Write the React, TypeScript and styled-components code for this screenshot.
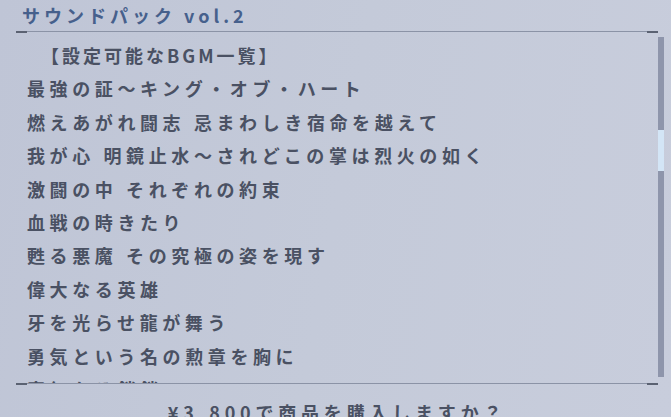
import styled, { createGlobalStyle } from 'styled-components';

const GlobalStyles = createGlobalStyle`
  html, body {
    margin: 0;
    padding: 0;
    overflow: hidden;
  }
  body {
    width: 671px;
    height: 417px;
    background: linear-gradient(100deg, #bfc5d6 0%, #c4cad9 50%, #c8cddc 100%);
    font-family: "Noto Sans CJK JP", "Noto Sans", sans-serif;
  }
`;

const tracks = [
  '【設定可能なBGM一覧】',
  '最強の証〜キング・オブ・ハート',
  '燃えあがれ闘志 忌まわしき宿命を越えて',
  '我が心 明鏡止水〜されどこの掌は烈火の如く',
  '激闘の中 それぞれの約束',
  '血戦の時きたり',
  '甦る悪魔 その究極の姿を現す',
  '偉大なる英雄',
  '牙を光らせ龍が舞う',
  '勇気という名の勲章を胸に',
  '真紅なる鎖鎖',
];

export default function App() {
  return (
    <>
      <GlobalStyles />
      <Screen>
        <Title>サウンドパック vol.2</Title>
        <Rule />
        <Body>
          <List>
            {tracks.map((t, i) => (
              <Item key={i} $head={i === 0}>{t}</Item>
            ))}
          </List>
          <Scrollbar>
            <Thumb />
          </Scrollbar>
        </Body>
        <Rule />
        <Question>¥3,800で商品を購入しますか？</Question>
      </Screen>
    </>
  );
}

const Screen = styled.div`
  width: 671px;
  height: 417px;
  display: flex;
  flex-direction: column;
  padding: 0 13px 0 16px;
  box-sizing: border-box;
  overflow: hidden;
`;

const Title = styled.div`
  flex-shrink: 0;
  height: 31px;
  padding-left: 6px;
  font-size: 18px;
  font-weight: 700;
  letter-spacing: 4px;
  line-height: 31px;
  color: #46608c;
  white-space: nowrap;
`;

const Rule = styled.div`
  flex-shrink: 0;
  position: relative;
  height: 1px;
  background: #8b93a6;

  &::before,
  &::after {
    content: '';
    position: absolute;
    top: 0;
    width: 11px;
    height: 2px;
    background: #5b6272;
  }
  &::before {
    left: 0;
  }
  &::after {
    right: 0;
  }
`;

const Body = styled.div`
  flex-shrink: 0;
  height: 351px;
  display: flex;
  overflow: hidden;
  margin-right: -6px;
`;

const List = styled.div`
  flex: 1;
  padding: 7px 0 0 11px;
`;

const Item = styled.div<{ $head: boolean }>`
  height: 33.4px;
  line-height: 33.4px;
  font-size: 18px;
  font-weight: 700;
  letter-spacing: ${(p) => (p.$head ? '3px' : '4.6px')};
  color: #4a5163;
  white-space: nowrap;
  margin-left: ${(p) => (p.$head ? '14px' : '0')};
`;

const Scrollbar = styled.div`
  width: 6px;
  margin: 5px 0 6px;
  background: #8e95ab;
  position: relative;
`;

const Thumb = styled.div`
  position: absolute;
  left: 0;
  right: 0;
  top: 93px;
  height: 41px;
  background: #d3e5f6;
`;

const Question = styled.div`
  flex-shrink: 0;
  text-align: center;
  padding-top: 16px;
  font-size: 18px;
  font-weight: 700;
  letter-spacing: 4.8px;
  line-height: 24px;
  color: #4a5163;
  white-space: nowrap;
`;
